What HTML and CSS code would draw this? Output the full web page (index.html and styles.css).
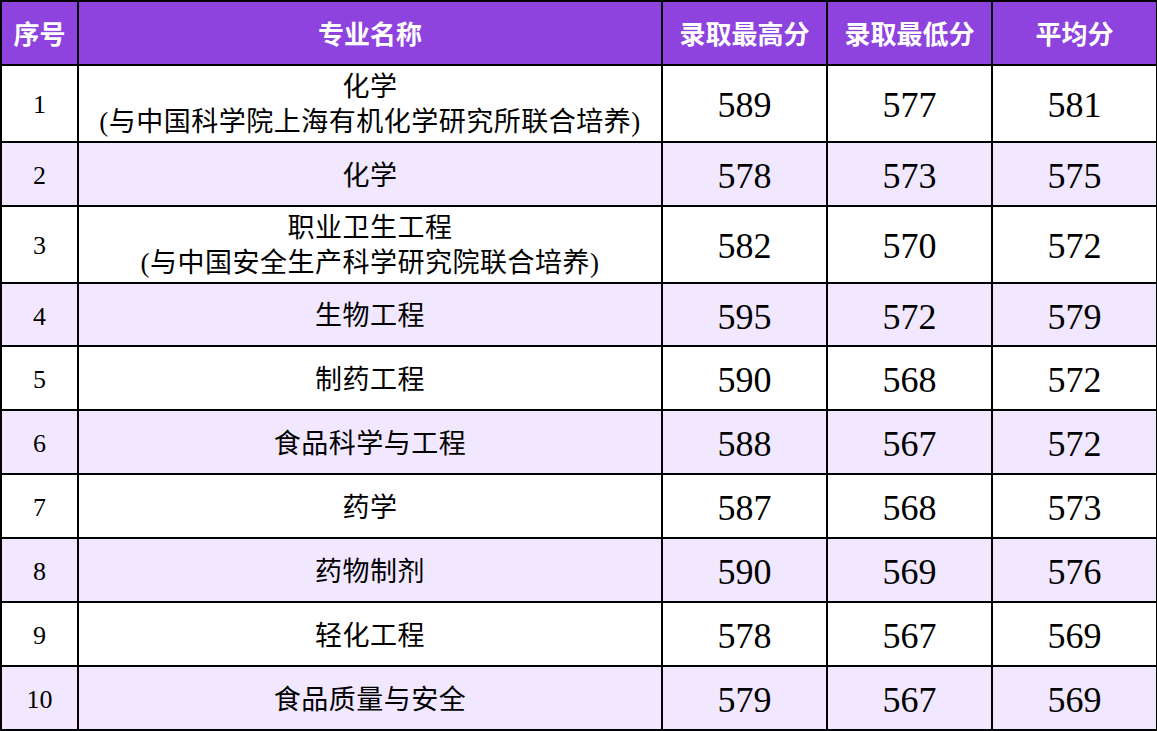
FILE: index.html
```html
<!DOCTYPE html>
<html lang="zh-CN">
<head>
<meta charset="utf-8">
<link rel="stylesheet" href="styles.css">
</head>
<body>
<table class="score-table">
  <colgroup>
    <col class="c-no"><col class="c-name"><col class="c-num"><col class="c-num"><col class="c-num">
  </colgroup>
  <thead>
    <tr class="head-row"><th>序号</th><th>专业名称</th><th>录取最高分</th><th>录取最低分</th><th>平均分</th></tr>
  </thead>
  <tbody>
    <tr class="row tall"><td class="no">1</td><td class="name">化学<br>(与中国科学院上海有机化学研究所联合培养)</td><td class="num">589</td><td class="num">577</td><td class="num">581</td></tr>
    <tr class="row alt"><td class="no">2</td><td class="name">化学</td><td class="num">578</td><td class="num">573</td><td class="num">575</td></tr>
    <tr class="row tall"><td class="no">3</td><td class="name">职业卫生工程<br>(与中国安全生产科学研究院联合培养)</td><td class="num">582</td><td class="num">570</td><td class="num">572</td></tr>
    <tr class="row alt short"><td class="no">4</td><td class="name">生物工程</td><td class="num">595</td><td class="num">572</td><td class="num">579</td></tr>
    <tr class="row"><td class="no">5</td><td class="name">制药工程</td><td class="num">590</td><td class="num">568</td><td class="num">572</td></tr>
    <tr class="row alt"><td class="no">6</td><td class="name">食品科学与工程</td><td class="num">588</td><td class="num">567</td><td class="num">572</td></tr>
    <tr class="row"><td class="no">7</td><td class="name">药学</td><td class="num">587</td><td class="num">568</td><td class="num">573</td></tr>
    <tr class="row alt"><td class="no">8</td><td class="name">药物制剂</td><td class="num">590</td><td class="num">569</td><td class="num">576</td></tr>
    <tr class="row"><td class="no">9</td><td class="name">轻化工程</td><td class="num">578</td><td class="num">567</td><td class="num">569</td></tr>
    <tr class="row alt"><td class="no">10</td><td class="name">食品质量与安全</td><td class="num">579</td><td class="num">567</td><td class="num">569</td></tr>
  </tbody>
</table>
</body>
</html>
```
FILE: styles.css
```css
html, body {
  margin: 0;
  padding: 0;
  background: #ffffff;
}
.score-table {
  border-collapse: collapse;
  table-layout: fixed;
  width: 1157px;
  margin: 0;
  color: #000;
}
.c-no { width: 77px; }
.c-name { width: 584px; }
.c-num { width: 165px; }
.score-table th,
.score-table td {
  border: 2px solid #000;
  text-align: center;
  vertical-align: middle;
  padding: 0;
}
.head-row th {
  height: 60px;
  padding-bottom: 2px;
  background: #8e43df;
  color: #fff;
  font-family: "Noto Sans CJK SC", sans-serif;
  font-weight: 700;
  font-size: 26px;
}
.row td { height: 58px; padding-top: 4px; }
.row.tall td { height: 73px; padding-top: 2px; }
.row.short td { height: 57px; }
.row.alt td { background: #f1e7fe; }
.no {
  font-family: "Liberation Serif", serif;
  font-size: 26px;
}
.name {
  font-family: "Liberation Serif", "Noto Sans CJK SC", serif;
  font-size: 27px;
  letter-spacing: 0.5px;
  line-height: 35px;
}
.num {
  font-family: "Liberation Serif", serif;
  font-size: 36px;
}
```
